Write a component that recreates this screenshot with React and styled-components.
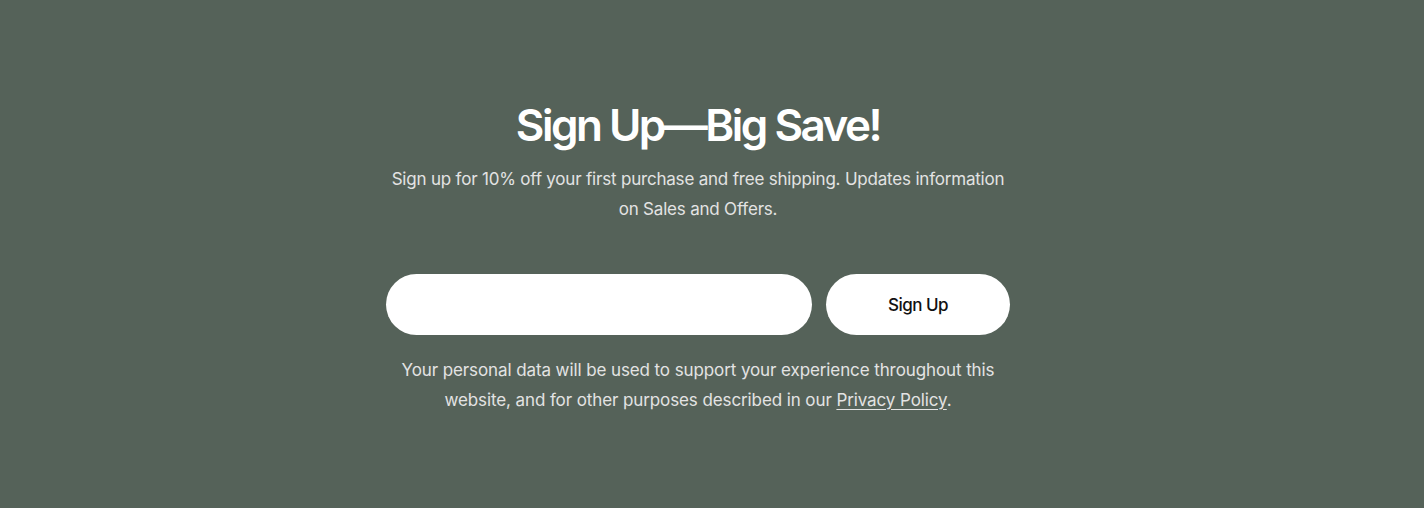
import React from "react";
import styled, { createGlobalStyle } from "styled-components";

const Global = createGlobalStyle`
  html, body { margin: 0; padding: 0; }
  body { background: #556259; font-family: Inter, "Noto Sans", sans-serif; }
`;

const Section = styled.section`
  height: 508px;
  background: #556259;
  display: flex;
  flex-direction: column;
  align-items: center;
  padding: 96px 28px 0 0;
  box-sizing: border-box;
`;

const Title = styled.h2`
  margin: 0;
  color: #ffffff;
  font-size: 44px;
  font-weight: 600;
  letter-spacing: -2.5px;
  line-height: 58px;
`;

const Lead = styled.p`
  margin: 10px 0 0;
  max-width: 625px;
  text-align: center;
  color: #e3e3e3;
  font-size: 17px;
  line-height: 30px;
  letter-spacing: -0.2px;
`;

const Form = styled.form`
  display: flex;
  gap: 14px;
  margin-top: 50px;
`;

const Input = styled.input`
  width: 426px;
  height: 61px;
  box-sizing: border-box;
  border: none;
  border-radius: 31px;
  background: #ffffff;
  padding: 0 24px;
  font-size: 16px;
  outline: none;
`;

const Button = styled.button`
  width: 184px;
  height: 61px;
  border: none;
  border-radius: 31px;
  background: #ffffff;
  color: #111111;
  font-family: Inter, sans-serif;
  font-size: 17px;
  font-weight: 500;
  letter-spacing: -0.5px;
  cursor: pointer;
`;

const Note = styled.p`
  margin: 20px 0 0;
  max-width: 610px;
  text-align: center;
  color: #e3e3e3;
  font-size: 17px;
  line-height: 30px;
  letter-spacing: -0.1px;
`;

const Link = styled.a`
  color: #e3e3e3;
  text-decoration: underline;
  text-underline-offset: 3px;
`;

export default function App() {
  return (
    <>
      <Global />
      <Section>
        <Title>Sign Up—Big Save!</Title>
        <Lead>
          Sign up for 10% off your first purchase and free shipping. Updates information on Sales and Offers.
        </Lead>
        <Form onSubmit={(e) => e.preventDefault()}>
          <Input type="email" aria-label="Email" />
          <Button type="submit">Sign Up</Button>
        </Form>
        <Note>
          Your personal data will be used to support your experience throughout this website, and for other purposes described in our{" "}
          <Link href="#">Privacy Policy</Link>.
        </Note>
      </Section>
    </>
  );
}
